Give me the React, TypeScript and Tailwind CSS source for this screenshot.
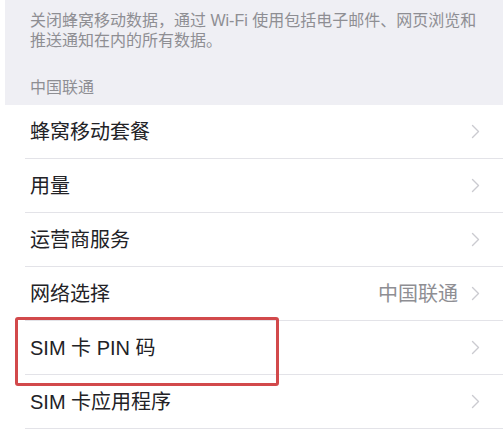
import React from "react";

const rows: { label: string; value?: string }[] = [
  { label: "蜂窝移动套餐" },
  { label: "用量" },
  { label: "运营商服务" },
  { label: "网络选择", value: "中国联通" },
  { label: "SIM 卡 PIN 码" },
  { label: "SIM 卡应用程序" },
];

function Chevron() {
  return (
    <svg width="9" height="15" viewBox="0 0 9 15" fill="none" className="shrink-0">
      <path d="M1.5 1.5 L7.5 7.5 L1.5 13.5" stroke="#cbcbd0" strokeWidth="1.4" strokeLinecap="round" strokeLinejoin="round" />
    </svg>
  );
}

export default function App() {
  return (
    <div
      className="relative w-[503px] h-[430px] overflow-hidden bg-white"
      style={{ fontFamily: '"Liberation Sans", "Noto Sans CJK SC", sans-serif' }}
    >
      <div className="ml-[5px] h-[105px] bg-[#efeff4] pl-[25px] pr-2 pt-[11px] text-[16px] leading-[20px] text-[#8e8e93]">
        <p className="whitespace-nowrap">关闭蜂窝移动数据，通过 Wi-Fi 使用包括电子邮件、网页浏览和</p>
        <p>推送通知在内的所有数据。</p>
        <p className="mt-[27px]">中国联通</p>
      </div>
      <div className="flex flex-col">
        {rows.map((r) => (
          <div key={r.label} className="flex h-[54px] flex-col pl-[25px]">
            <div className="flex flex-1 items-center pl-[5px] pr-[23px]">
              <span className="flex-1 text-[20px] text-[#222226]">{r.label}</span>
              {r.value && (
                <span className="mr-[13px] text-[20px] text-[#8e8e93]">{r.value}</span>
              )}
              <Chevron />
            </div>
            <div className="h-px bg-[#e3e3e8]" />
          </div>
        ))}
      </div>
      <div className="absolute left-[15px] top-[317px] h-[69px] w-[264px] rounded-[3px] border-[3px] border-[#d2494b]" />
    </div>
  );
}
